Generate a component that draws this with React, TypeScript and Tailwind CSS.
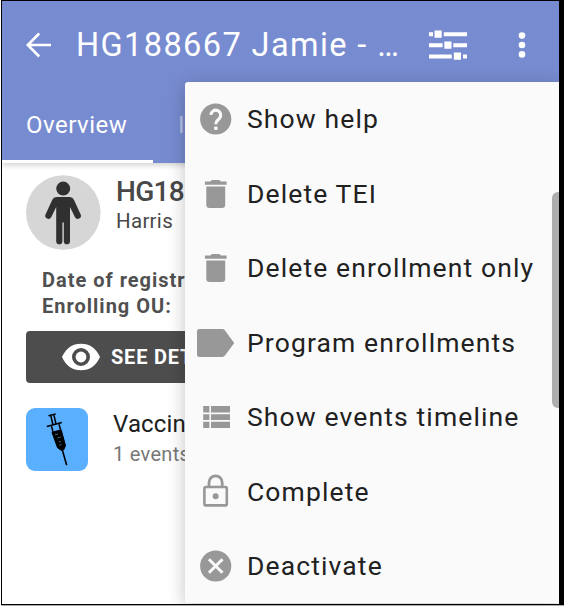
import React from "react";

type IconName = "help" | "trash" | "tag" | "list" | "lock" | "close";

function MenuIcon({ name }: { name: IconName }) {
  return (
    <svg viewBox="0 0 40 40" className="h-10 w-10 shrink-0" fill="#989898">
      {name === "help" && (
        <>
          <circle cx="19.7" cy="20" r="15.6" />
          <path d="M14.9 15.9a4.9 4.9 0 1 1 8.6 3.4c-1.9 1.9-3.7 2.9-3.7 6" fill="none" stroke="#fafafa" strokeWidth="3.1" />
          <rect x="18.2" y="27.6" width="3.3" height="3.3" fill="#fafafa" />
        </>
      )}
      {name === "trash" && (
        <path d="M8.9 7.6h5.4L16 6h7.3L25 7.6h5.6v3.2H8.9zM10.3 12.5h18.9v18.3q0 3.2-3.2 3.2H13.5q-3.2 0-3.2-3.2z" />
      )}
      {name === "tag" && (
        <path d="M3.3 6h23q1.7 0 2.7 1.4L38.2 20 29 32.6Q28 34 26.3 34h-23Q1 34 1 31.8V8.2Q1 6 3.3 6z" />
      )}
      {name === "list" && (
        <path d="M7.2 9.1h6.2v6.4H7.2zM15 9.1h19v6.4H15zM7.2 17.2h6.2v5.8H7.2zM15 17.2h19v5.8H15zM7.2 24.7h6.2V31H7.2zM15 24.7h19V31H15z" />
      )}
      {name === "lock" && (
        <>
          <rect x="8.4" y="15" width="22.4" height="18.4" rx="1.5" fill="none" stroke="#989898" strokeWidth="2.6" />
          <path d="M13 15v-4.3a6.6 6.9 0 0 1 13.2 0V15" fill="none" stroke="#989898" strokeWidth="2.8" />
          <circle cx="19.6" cy="24.2" r="3" />
        </>
      )}
      {name === "close" && (
        <>
          <circle cx="19.7" cy="20" r="15.6" />
          <path d="m12.9 13.2 13.6 13.6m0-13.6L12.9 26.8" stroke="#fafafa" strokeWidth="3" />
        </>
      )}
    </svg>
  );
}

const menu: { icon: IconName; label: string }[] = [
  { icon: "help", label: "Show help" },
  { icon: "trash", label: "Delete TEI" },
  { icon: "trash", label: "Delete enrollment only" },
  { icon: "tag", label: "Program enrollments" },
  { icon: "list", label: "Show events timeline" },
  { icon: "lock", label: "Complete" },
  { icon: "close", label: "Deactivate" },
];

export default function App() {
  return (
    <div className="relative h-[606px] w-[564px] overflow-hidden bg-white pl-px font-[Roboto,sans-serif]">
      <div className="h-[605px] w-[563px] overflow-hidden border-t border-r-[5px] border-b border-l border-black bg-white">
        <header className="h-[162px] bg-[#778bd0] text-white shadow-[0_2px_6px_rgba(0,0,0,0.2)]">
          <div className="flex h-[88px] items-center pl-[24px]">
            <svg viewBox="0 0 26 26" className="h-[26px] w-[26px] shrink-0" fill="none" stroke="white" strokeWidth="2.6">
              <path d="M25 13H2.5M13.2 1.5 1.8 13l11.4 11.5" />
            </svg>
            <h1 className="ml-[24px] w-[327px] whitespace-nowrap text-[32.5px] leading-none tracking-[1.4px]">HG188667 Jamie - …</h1>
            <svg viewBox="0 0 38 32" className="ml-[26px] h-8 w-[38px] shrink-0" fill="white">
              <path d="M0 3.3h4v4H0zM5.5 1.5h7.2v7.2H5.5zM14.8 3.3H38v4H14.8zM0 14.3h13.6v4H0zM15.3 12.5h7.2v7.2h-7.2zM24.3 14.3H38v4H24.3zM0 25.6h22.8v4H0zM24.8 23.6H32v7.2h-7.2zM34 25.6h4v4h-4z" />
            </svg>
            <svg viewBox="0 0 8 28" className="ml-[51px] h-7 w-2 shrink-0" fill="white">
              <circle cx="4" cy="4.6" r="3.3" /><circle cx="4" cy="14" r="3.3" /><circle cx="4" cy="23.4" r="3.3" />
            </svg>
          </div>
          <nav className="flex h-[74px] text-[24px]">
            <div className="h-full w-[151px] border-b-[3px] border-white pt-[22px] pl-[24px] leading-[28px] tracking-[0.5px]">Overview</div>
            <div className="pt-[22px] pl-[25px] leading-[28px] text-[#b8c3e8]">I</div>
          </nav>
        </header>
        <main className="pl-[24px]">
          <section className="flex h-[86px] pt-[12px]">
            <svg viewBox="0 0 75 75" className="h-[75px] w-[75px] shrink-0" fill="#303030">
              <circle cx="37.3" cy="37.5" r="37.3" fill="#d6d6d6" />
              <circle cx="37.2" cy="13.6" r="7" />
              <path d="M30.5 22h13.2q3 0 4.2 2.7l6.9 15a3.2 3.2 0 0 1-5.8 2.6l-5-10.3v34.2a3.1 3.1 0 0 1-6.2 0V47.5h-1.4v18.7a3.1 3.1 0 0 1-6.2 0V32l-5 10.3a3.2 3.2 0 0 1-5.8-2.6l6.9-15Q27.5 22 30.5 22z" />
            </svg>
            <div className="ml-[15px] whitespace-nowrap">
              <p className="mt-[1px] text-[28px] leading-[32px] font-medium tracking-[-0.7px] text-[#484848]">HG18</p>
              <p className="text-[20.5px] leading-[26px] tracking-[0.3px] text-[#484848]">Harris</p>
            </div>
          </section>
          <section className="mt-[18px] pl-[16px] text-[20px] leading-[26px] font-bold tracking-[1px] whitespace-nowrap text-[#505050]">
            <p>Date of registr</p>
            <p>Enrolling OU:</p>
          </section>
          <button className="mt-[12px] flex h-[52px] w-[520px] items-center rounded-[4px] bg-[#4d4d4d] pl-[36px] text-white">
            <svg viewBox="0 0 38 28" className="h-7 w-[38px]" fill="white">
              <path fillRule="evenodd" d="M0 14Q6 .7 19 .7T38 14Q32 27.3 19 27.3T0 14zM10 14a9 9 0 1 0 18 0 9 9 0 0 0-18 0z" />
              <circle cx="19" cy="14" r="5.4" />
            </svg>
            <span className="ml-[11px] text-[20px] leading-[26px] font-bold tracking-[0.8px]">SEE DET</span>
          </button>
          <section className="mt-[25px] flex">
            <div className="h-[63px] w-[62px] shrink-0 rounded-[9px] bg-[#5aafff]">
              <svg viewBox="0 0 62 63" className="h-[63px] w-[62px]" stroke="black" fill="none">
                <path d="m22.5 7.8 7.2-1.7M24.8 7.5l2.3 10M27.9 6.8l2.3 10M20.8 18.5l15-4M25.5 18.3l1.5 5.5M33 16.3l1.6 5.5" strokeWidth="1.5" />
                <path d="m26 24.3 9.2-2.5 4.3 15.8-1.8 4.2-2.2.7-4-2.8z" fill="black" />
                <path d="m36.2 41.5 4.5 15.8" strokeWidth="1.6" />
                <path d="m29 26.8 3-.9M31.3 30l3.5-1M32.8 34l2-.6M33.5 37.2l2-.6" stroke="#6596c4" strokeWidth=".7" />
              </svg>
            </div>
            <div className="ml-[25px] whitespace-nowrap">
              <p className="text-[24px] leading-[33px] tracking-[0.15px] text-[#202020]">Vaccin</p>
              <p className="text-[20px] leading-[26px] tracking-[0.3px] text-[#777]">1 events</p>
            </div>
          </section>
        </main>
      </div>
      <div className="absolute top-[62px] left-[160px] h-[542px] w-[399px] overflow-hidden pt-[20px] pl-[25px]">
        <div className="h-[521px] w-[374px] rounded-l-[3px] bg-[#fafafa] pl-[11px] shadow-[0_4px_18px_rgba(0,0,0,0.24)]">
          {menu.map((item) => (
            <div key={item.label} className="flex h-[74.5px] items-center">
              <MenuIcon name={item.icon} />
              <span className="ml-[11px] text-[26.5px] leading-8 tracking-[1.12px] whitespace-nowrap text-[#212121]">{item.label}</span>
            </div>
          ))}
        </div>
      </div>
      <div className="absolute top-[192px] left-[552px] h-[216px] w-[7px] rounded-l-[6px] bg-[#adadad]" />
      <div className="absolute bottom-0 left-px h-px w-[563px] bg-[#aaa]" />
    </div>
  );
}
